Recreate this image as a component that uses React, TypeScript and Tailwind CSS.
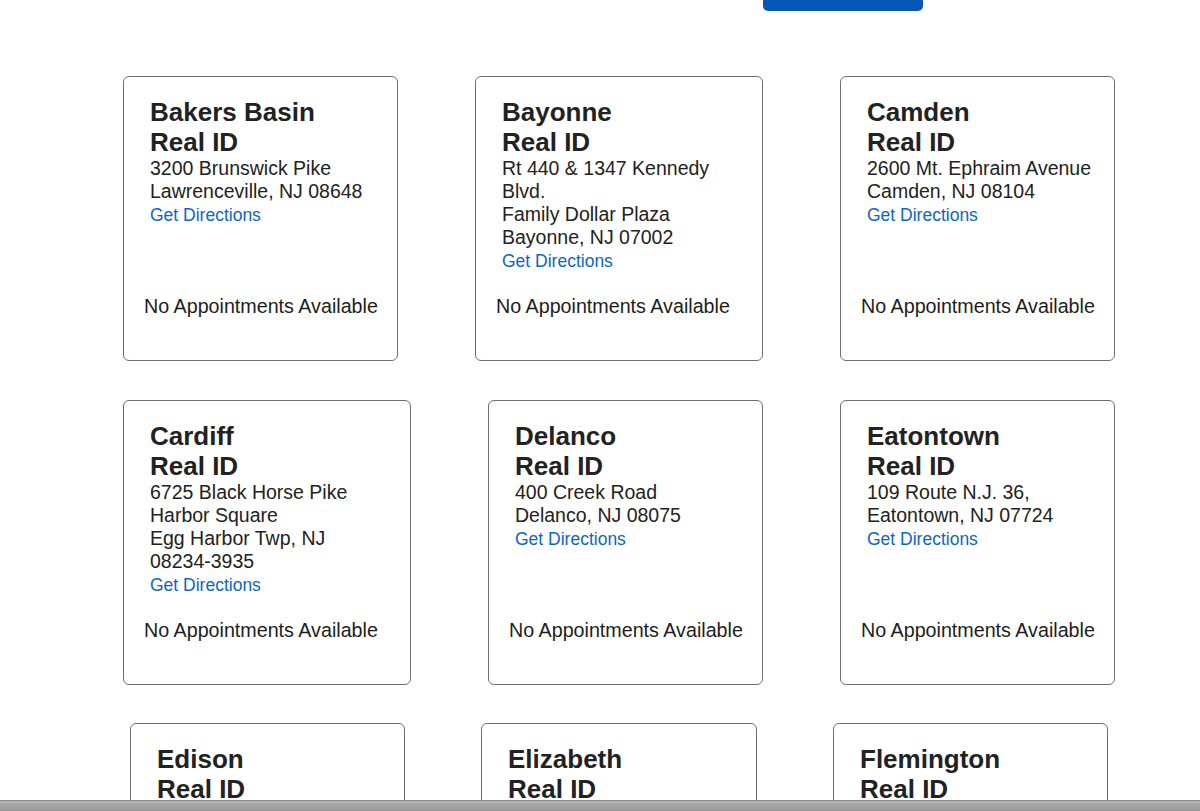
import React from "react";

type Location = {
  name: string;
  lines: string[];
  cls: string;
};

const rows: Location[][] = [
  [
    { name: "Bakers Basin", lines: ["3200 Brunswick Pike", "Lawrenceville, NJ 08648"], cls: "ml-0 w-[275px]" },
    { name: "Bayonne", lines: ["Rt 440 & 1347 Kennedy", "Blvd.", "Family Dollar Plaza", "Bayonne, NJ 07002"], cls: "ml-0 w-[288px]" },
    { name: "Camden", lines: ["2600 Mt. Ephraim Avenue", "Camden, NJ 08104"], cls: "ml-[13px] w-[275px]" },
  ],
  [
    { name: "Cardiff", lines: ["6725 Black Horse Pike", "Harbor Square", "Egg Harbor Twp, NJ", "08234-3935"], cls: "ml-0 w-[288px]" },
    { name: "Delanco", lines: ["400 Creek Road", "Delanco, NJ 08075"], cls: "ml-[13px] w-[275px]" },
    { name: "Eatontown", lines: ["109 Route N.J. 36,", "Eatontown, NJ 07724"], cls: "ml-[13px] w-[275px]" },
  ],
  [
    { name: "Edison", lines: ["1 Kilmer Road", "Edison, NJ 08817"], cls: "ml-[7px] w-[275px]" },
    { name: "Elizabeth", lines: ["40 Kilmer Road", "Elizabeth, NJ 07201"], cls: "ml-[6px] w-[276px]" },
    { name: "Flemington", lines: ["119 Route 31", "Flemington, NJ 08822"], cls: "ml-[6px] w-[275px]" },
  ],
];

function LocationCard({ loc }: { loc: Location }) {
  return (
    <div
      className={`${loc.cls} h-[285px] flex flex-col border border-[#6f6f6f] rounded-[6px] bg-white pl-[20px] pr-[21px] pt-[20px] pb-[42px]`}
    >
      <div className="pl-[6px]">
        <h3 className="text-[26px] leading-[30px] font-bold text-[#222222]">
          {loc.name}
          <br />
          Real ID
        </h3>
        {loc.lines.map((l) => (
          <div key={l} className="text-[19.5px] leading-[23px] text-[#222222] whitespace-nowrap">
            {l}
          </div>
        ))}
        <a href="#" className="block text-[17.5px] leading-[24px] text-[#0b66c6]">
          Get Directions
        </a>
      </div>
      <p className="mt-auto text-[19.7px] leading-[23px] text-[#1d1d1d] whitespace-nowrap">
        No Appointments Available
      </p>
    </div>
  );
}

export default function App() {
  return (
    <div
      className="relative h-[811px] w-[1200px] overflow-hidden bg-white"
      style={{ fontFamily: '"Liberation Sans", Arial, Helvetica, sans-serif' }}
    >
      <div className="ml-[763px] h-[11px] w-[160px] rounded-b-[5px] bg-[#0757b9]" />
      <div className="mt-[65px] pl-[123px] flex flex-col">
        {rows.map((row, i) => (
          <div
            key={i}
            className={`grid grid-cols-[352px_352px_352px] items-start ${i === 1 ? "mt-[39px]" : i === 2 ? "mt-[38px]" : ""}`}
          >
            {row.map((loc) => (
              <LocationCard key={loc.name} loc={loc} />
            ))}
          </div>
        ))}
      </div>
      {/* window frame edge */}
      <div className="absolute bottom-0 left-0 h-[11px] w-full border-t border-[#8c8c8c] bg-gradient-to-b from-[#b3b3b3] to-[#979797]" />
    </div>
  );
}
